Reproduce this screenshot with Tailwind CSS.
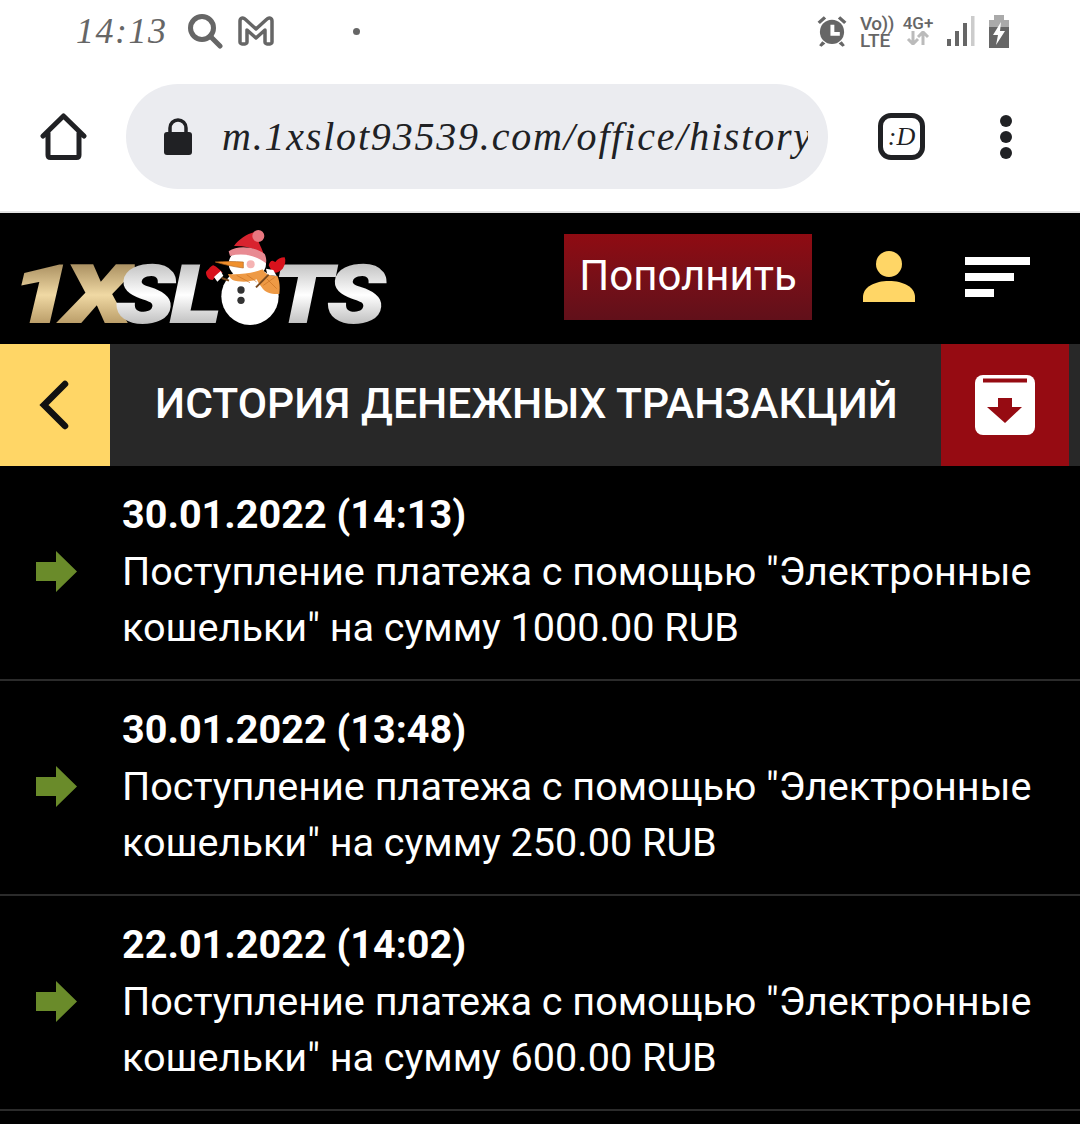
<!doctype html>
<html><head><meta charset="utf-8"><script src="https://cdn.jsdelivr.net/npm/@tailwindcss/browser@4"></script></head>
<body class="w-[1080px] h-[1124px] overflow-hidden bg-black font-['Roboto',sans-serif] text-white">
<div class="bg-white h-[211px] flex flex-col">
  <div class="h-[84px] relative text-[#666]">
    <div class="flex items-center h-[62px] pl-[76px]">
      <span class="w-[90px] text-[36px] leading-none italic font-['Liberation_Serif',serif] tracking-[1.500px] text-[#666] whitespace-nowrap">14:13</span>
      <svg class="ml-[21px]" width="36" height="36" viewBox="0 0 36 36" fill="none" stroke="#666" stroke-width="5"><circle cx="15" cy="15" r="11.5"/><path d="M23 23l10 10" stroke-linecap="round"/></svg>
      <svg class="ml-[15px]" width="36" height="30" viewBox="0 0 36 30" fill="none" stroke="#666" stroke-width="3.5" stroke-linejoin="round"><path d="M2 5c0-3 3-4 5-2l11 10L29 3c2-2 5-1 5 2v21c0 1-1 2-2 2h-3c-1 0-2-1-2-2V14l-9 8-9-8v12c0 1-1 2-2 2H4c-1 0-2-1-2-2z"/></svg>
      <span class="ml-[79px] size-[7px] rounded-full bg-[#666]"></span>
    </div>
    <div class="absolute left-[816px] top-[15px] w-[200px] h-[36px] flex items-start">
      <svg width="32" height="33" viewBox="0 0 41 41" fill="#666"><path d="M2 8l8-7 3 3-8 7zM39 8l-8-7-3 3 8 7z"/><circle cx="20.500" cy="21" r="15.500"/><path d="M8 33l-4 5 3 2 5-4zM33 33l4 5-3 2-5-4z"/><path d="M18.500 12h5v9h7v5h-12z" fill="#fff"/></svg>
      <div class="ml-[12px] w-[32px] text-[19px] leading-[17px] font-medium text-[#666] whitespace-nowrap"><div class="tracking-[-0.5px]">Vo))</div><div>LTE</div></div>
      <div class="ml-[11px] w-[30px] flex flex-col items-center"><span class="text-[17px] leading-[16px] font-medium text-[#666] whitespace-nowrap">4G+</span>
        <svg width="24" height="14" viewBox="0 0 24 14" fill="none" stroke="#bbb" stroke-width="3"><path d="M7 0v12M2 8l5 5 5-5M17 14V2M12 6l5-5 5 5"/></svg></div>
      <svg class="ml-[14px]" width="28" height="32" viewBox="0 0 28 32"><rect x="0" y="24" width="4" height="7" fill="#666"/><rect x="8" y="16" width="4" height="15" fill="#666"/><rect x="16" y="8" width="4" height="23" fill="#666"/><rect x="24" y="1" width="3.500" height="30" fill="#ccc"/></svg>
      <svg class="ml-[13px]" width="22" height="33" viewBox="0 0 22 33"><path d="M6 0h10v5H6z" fill="#aaa"/><path d="M1 5h20v7H1z" fill="#aaa"/><path d="M1 12h20v21H1z" fill="#666"/><path d="M13 7L5 20h5l-2 10 9-14h-5z" fill="#fff"/></svg>
    </div>
  </div>
  <div class="flex items-center h-[105px]">
    <svg class="ml-[40px]" width="47" height="47" viewBox="0 0 47 47" fill="none" stroke="#202124" stroke-width="5" stroke-linejoin="round" stroke-linecap="round"><path d="M3 23L23.500 3 44 23M8 20v22c0 1.500 1 2.500 2.500 2.500h26c1.500 0 2.500-1 2.500-2.500V20"/></svg>
    <div class="ml-[39px] w-[702px] h-[105px] rounded-full bg-[#ebecf0] flex items-center pl-[37px] pr-[20px]">
      <svg class="shrink-0" width="30" height="37" viewBox="0 0 30 37"><path d="M7 16V10a8 8 0 0 1 16 0v6" fill="none" stroke="#202124" stroke-width="3.500"/><rect x="1" y="14" width="28" height="23" rx="3" fill="#202124"/></svg>
      <div class="ml-[29px] overflow-hidden whitespace-nowrap text-[40px] leading-[50px] italic font-['Liberation_Serif',serif] text-[#202124] tracking-[1.800px]">m.1xslot93539.com/office/history</div>
    </div>
    <div class="ml-[50px] size-[47px] rounded-[13px] border-[5px] border-[#202124] flex items-center justify-center text-[#202124] text-[26px] leading-none italic font-['Liberation_Serif',serif]">:D</div>
    <div class="ml-[75px] flex flex-col gap-[4px] items-center">
      <span class="size-[12px] rounded-full bg-[#202124]"></span><span class="size-[12px] rounded-full bg-[#202124]"></span><span class="size-[12px] rounded-full bg-[#202124]"></span>
    </div>
  </div>
</div>
<div class="h-[2px] bg-[#e3e3e3]"></div>
<header class="h-[131px] bg-black relative">
  <div class="absolute left-[20px] top-[28px] h-[100px] w-[370px]" aria-label="1XSLOTS">
    <span class="absolute left-[-9px] top-[8px] origin-left scale-x-[1.36] text-[80px] leading-[92px] font-black italic tracking-[-6px] [-webkit-text-stroke:2px_transparent] bg-linear-to-b from-[#8a6f43] via-[#f0d9a4] to-[#9a7a45] bg-clip-text text-transparent pr-2">1X</span>
    <span class="absolute left-[96px] top-[8px] origin-left scale-x-[1.2] text-[80px] leading-[92px] font-black italic tracking-[-3px] [-webkit-text-stroke:2px_transparent] bg-linear-to-b from-[#a8a8a8] via-[#ffffff] to-[#9c9c9c] bg-clip-text text-transparent pr-2">SL</span>
    <span class="absolute left-[254px] top-[8px] origin-left scale-x-[1.18] text-[80px] leading-[92px] font-black italic tracking-[-3px] [-webkit-text-stroke:2px_transparent] bg-linear-to-b from-[#a8a8a8] via-[#ffffff] to-[#9c9c9c] bg-clip-text text-transparent pr-2">TS</span>
    <svg class="absolute left-[180px] top-[-16px]" width="90" height="104" viewBox="600 30 270 310">
      <circle cx="750" cy="243" r="86" fill="#fff"/><ellipse cx="742" cy="145" rx="56" ry="46" fill="#fff"/>
      <path d="M702 92c14-20 38-36 62-42 6 20 18 40 28 68-28-20-60-28-90-26z" fill="#d8232f"/>
      <circle cx="775" cy="62" r="18" fill="#e8777f"/>
      <path d="M686 108c28-20 78-14 108 8 4 8 6 18 4 28-30-24-70-32-108-22z" fill="#e88a92"/>
      <path d="M646 140c28-2 56-2 84 0v18c-30-4-58-10-84-18z" fill="#f0902c" stroke="#b5651d" stroke-width="2"/>
      <circle cx="752" cy="147" r="12" fill="#f5b3b3"/>
      <path d="M684 176c30 2 70 0 104-14 8 14 16 18 44 20 8 16 8 36 6 54-20 2-44-4-54-22-8-10-10-14-14-22-22 10-56 8-72 2-8-6-12-12-14-18z" fill="#ee9a45"/>
      <path d="M710 180l40 22M740 178l30 22M800 190l30 30M790 210l34-24" stroke="#c96f1f" stroke-width="2" fill="none"/>
      <path d="M618 170c8-8 16-20 22-20 10 4 20 14 28 22l-22 12-8 10c-12 0-20-10-20-24z" fill="#d8121c"/>
      <path d="M642 185l20-18 8 14-18 18z" fill="#fff"/>
      <path d="M806 150c2-8 6-14 12-14l8 4c6-8 16-14 28-14 4 10 2 22-6 34-8 8-16 12-22 12-10-4-16-12-20-22z" fill="#d8121c"/>
      <path d="M798 160l22 4 10 18-28-4z" fill="#fff"/>
      <path d="M665 188l22 8M806 178l-38 38" stroke="#7a4a1e" stroke-width="6"/>
      <circle cx="723" cy="224" r="11" fill="#333"/><circle cx="723" cy="255" r="11" fill="#333"/>
    </svg>
  </div>
  <div class="absolute left-[564px] top-[21px] w-[248px] h-[86px] pb-[3px] flex items-center justify-center text-[42px] bg-linear-to-b from-[#8f0b12] to-[#61101a]">Пополнить</div>
  <svg class="absolute left-[863px] top-[38px]" width="52" height="51" viewBox="0 0 52 51" fill="#ffd666"><circle cx="26" cy="13" r="13"/><path d="M0 51v-5c0-10 12-16 26-16s26 6 26 16v5z"/></svg>
  <div class="absolute left-[965px] top-[44px] flex flex-col gap-[8px]">
    <span class="block w-[65px] h-[8px] bg-white"></span><span class="block w-[49px] h-[8px] bg-white"></span><span class="block w-[29px] h-[8px] bg-white"></span>
  </div>
</header>
<section class="h-[122px] bg-[#282828] flex">
  <div class="w-[110px] bg-[#ffd666] flex items-center justify-center">
    <svg width="32" height="50" viewBox="0 0 32 50" fill="none" stroke="#111" stroke-width="6.5" stroke-linecap="round"><path d="M26 4L5 25l21 21"/></svg>
  </div>
  <h1 class="w-[831px] pl-[2px] pb-[2px] flex items-center justify-center text-[42.600px] font-medium">ИСТОРИЯ ДЕНЕЖНЫХ ТРАНЗАКЦИЙ</h1>
  <div class="w-[128px] bg-[#960b12] flex items-center justify-center">
    <svg width="60" height="60" viewBox="0 0 60 60"><rect x="0" y="0" width="60" height="60" rx="8" fill="#fff"/><rect x="8" y="3.500" width="44" height="4" fill="#960b12"/><path d="M23 23h14v9h10L30 48 12 32h11z" fill="#960b12"/></svg>
  </div>
</section>
<main>
  <article class="h-[215px] border-b-2 border-[#2b2b2b] flex items-start">
    <svg class="ml-[36px] mt-[85px] shrink-0" width="41" height="41" viewBox="0 0 41 41" fill="#6a8b2a"><path d="M0 11h20V0l21 20.500L20 41V30H0z"/></svg>
    <div class="ml-[45px] pt-[21px] text-[39.600px] leading-[56px]"><div class="font-bold">30.01.2022 (14:13)</div><div class="mt-[1px]">Поступление платежа с помощью "Электронные кошельки" на сумму 1000.00 RUB</div></div>
  </article>
  <article class="h-[215px] border-b-2 border-[#2b2b2b] flex items-start">
    <svg class="ml-[36px] mt-[85px] shrink-0" width="41" height="41" viewBox="0 0 41 41" fill="#6a8b2a"><path d="M0 11h20V0l21 20.500L20 41V30H0z"/></svg>
    <div class="ml-[45px] pt-[21px] text-[39.600px] leading-[56px]"><div class="font-bold">30.01.2022 (13:48)</div><div class="mt-[1px]">Поступление платежа с помощью "Электронные кошельки" на сумму 250.00 RUB</div></div>
  </article>
  <article class="h-[215px] border-b-2 border-[#2b2b2b] flex items-start">
    <svg class="ml-[36px] mt-[85px] shrink-0" width="41" height="41" viewBox="0 0 41 41" fill="#6a8b2a"><path d="M0 11h20V0l21 20.500L20 41V30H0z"/></svg>
    <div class="ml-[45px] pt-[21px] text-[39.600px] leading-[56px]"><div class="font-bold">22.01.2022 (14:02)</div><div class="mt-[1px]">Поступление платежа с помощью "Электронные кошельки" на сумму 600.00 RUB</div></div>
  </article>
</main>
</body></html>
